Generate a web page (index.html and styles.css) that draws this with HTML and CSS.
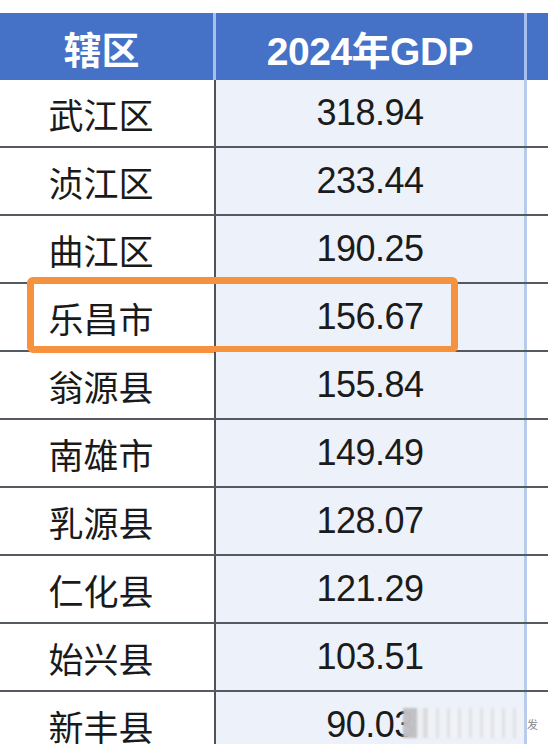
FILE: index.html
```html
<!DOCTYPE html>
<html lang="zh-CN">
<head>
<meta charset="utf-8">
<link rel="stylesheet" href="styles.css">
</head>
<body>
<div class="sheet">
  <div class="row head">
    <div class="c1">辖区</div>
    <div class="c2">2024年GDP</div>
    <div class="c3"></div>
  </div>
  <div class="row"><div class="c1">武江区</div><div class="c2">318.94</div><div class="c3"></div></div>
  <div class="row"><div class="c1">浈江区</div><div class="c2">233.44</div><div class="c3"></div></div>
  <div class="row"><div class="c1">曲江区</div><div class="c2">190.25</div><div class="c3"></div></div>
  <div class="row hl"><div class="c1">乐昌市</div><div class="c2">156.67</div><div class="c3"></div><div class="mark"></div></div>
  <div class="row"><div class="c1">翁源县</div><div class="c2">155.84</div><div class="c3"></div></div>
  <div class="row"><div class="c1">南雄市</div><div class="c2">149.49</div><div class="c3"></div></div>
  <div class="row"><div class="c1">乳源县</div><div class="c2">128.07</div><div class="c3"></div></div>
  <div class="row"><div class="c1">仁化县</div><div class="c2">121.29</div><div class="c3"></div></div>
  <div class="row"><div class="c1">始兴县</div><div class="c2">103.51</div><div class="c3"></div></div>
  <div class="row last"><div class="c1">新丰县</div><div class="c2">90.03</div><div class="c3"></div><div class="wm"></div><span class="wm-text">发</span></div>
</div>
</body>
</html>
```

FILE: styles.css
```css
html, body {
  margin: 0;
  padding: 0;
  background: #ffffff;
  overflow: hidden;
}
.sheet {
  padding-top: 13px;
  width: 548px;
  font-family: "Liberation Sans", "Noto Sans CJK SC", sans-serif;
}
.row {
  position: relative;
  display: grid;
  grid-template-columns: 216px 311px 21px;
  height: 66px;
  border-bottom: 2px solid #555a60;
}
.row > div {
  display: flex;
  align-items: center;
  justify-content: center;
}
.c1 {
  font-family: "Noto Sans CJK SC", sans-serif;
  font-size: 35px;
  color: #1a1a1a;
  padding-right: 12px;
  border-right: 2px solid #4e5359;
}
.c2 {
  background: #edf1f9;
  font-size: 36px;
  color: #1b1b1b;
  letter-spacing: -0.5px;
  border-right: 3px solid #b9cbec;
}
.c3 {
  background: #ffffff;
}
.head {
  height: 67px;
  border-bottom: none;
  background: #4572c6;
}
.head .c1 {
  font-weight: 700;
  color: #ffffff;
  font-size: 38px;
  border-right: 3px solid #a6bfee;
  padding-right: 10px;
}
.head .c2 {
  background: #4572c6;
  color: #ffffff;
  font-weight: 700;
  font-size: 39px;
  letter-spacing: -0.5px;
  border-right: 3px solid #a6bfee;
}
.head .c3 {
  background: #4572c6;
}
.head .c2, .head .c1 {
  box-sizing: border-box;
  padding-top: 2px;
}
.mark {
  position: absolute;
  left: 27px;
  top: -7px;
  width: 431px;
  height: 76px;
  box-sizing: border-box;
  border: 7px solid #f6913d;
  border-radius: 6px;
}
.wm {
  position: absolute;
  left: 403px;
  top: 16px;
  width: 120px;
  height: 30px;
  background:
    linear-gradient(90deg, rgba(190,190,195,0.95) 0 14px, rgba(236,238,242,0.9) 14px 20px, rgba(215,215,218,0.8) 20px 24px, transparent 24px),
    repeating-linear-gradient(90deg, rgba(222,223,226,0.85) 0 3px, rgba(240,242,246,0.7) 3px 11px);
  filter: blur(1.2px);
}
.wm-text {
  position: absolute;
  left: 527px;
  top: 24px;
  font-family: "Noto Sans CJK SC", sans-serif;
  font-size: 11px;
  color: #888888;
}
```
